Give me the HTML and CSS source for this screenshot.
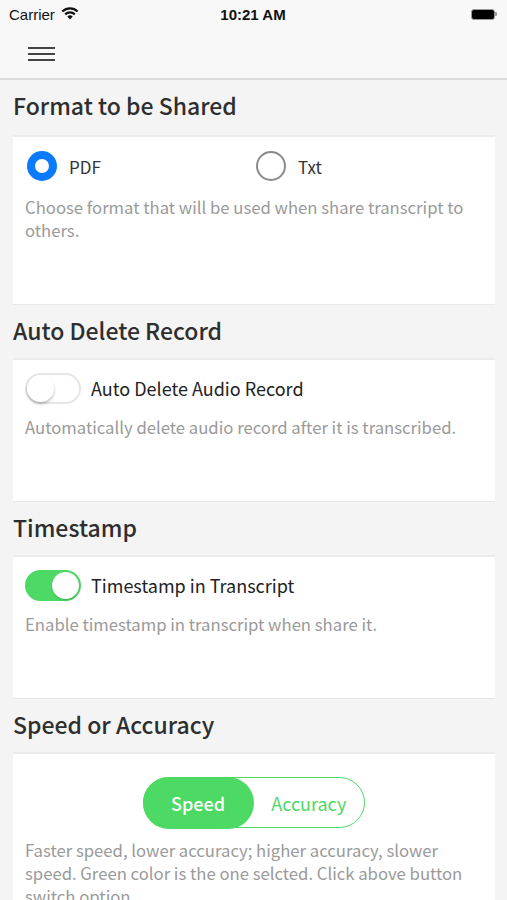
FILE: index.html
```html
<!DOCTYPE html>
<html lang="en">
<head>
  <meta charset="UTF-8" />
  <meta name="viewport" content="width=device-width, initial-scale=1.0"/>
  <title>Settings</title>
  <link rel="stylesheet" href="styles.css">
</head>
<body>

  <!-- status bar -->
  <div class="status-bar">
    <div class="carrier">
      Carrier
      <svg class="wifi" width="18" height="13" viewBox="0 0 18 13">
        <path d="M9 12.5 L6.3 9.6 A4 4 0 0 1 11.7 9.6 Z" fill="#111"/>
        <path d="M4.2 7.4 A6.8 6.8 0 0 1 13.8 7.4" stroke="#111" stroke-width="2.2" fill="none"/>
        <path d="M1.4 4.5 A10.8 10.8 0 0 1 16.6 4.5" stroke="#111" stroke-width="2.2" fill="none"/>
      </svg>
    </div>
    <div class="clock">10:21 AM</div>
    <div class="battery">
      <span class="battery-body"></span><span class="battery-nub"></span>
    </div>
  </div>

  <!-- nav bar -->
  <div class="nav-bar">
    <span class="hamburger"><i></i><i></i><i></i></span>
  </div>

  <section>
    <h2 class="first">Format to be Shared</h2>
    <div class="card">
      <div class="radio-row">
        <label class="radio checked"><span class="dot"></span>PDF</label>
        <label class="radio"><span class="dot"></span>Txt</label>
      </div>
      <p class="desc">Choose format that will be used when share transcript to others.</p>
    </div>
  </section>

  <section>
    <h2>Auto Delete Record</h2>
    <div class="card">
      <div class="switch-row">
        <span class="switch"><span class="knob"></span></span>
        <span class="switch-label">Auto Delete Audio Record</span>
      </div>
      <p class="desc">Automatically delete audio record after it is transcribed.</p>
    </div>
  </section>

  <section>
    <h2>Timestamp</h2>
    <div class="card">
      <div class="switch-row">
        <span class="switch on"><span class="knob"></span></span>
        <span class="switch-label">Timestamp in Transcript</span>
      </div>
      <p class="desc">Enable timestamp in transcript when share it.</p>
    </div>
  </section>

  <section>
    <h2>Speed or Accuracy</h2>
    <div class="card card-last">
      <div class="segment">
        <button class="seg-btn active">Speed</button>
        <button class="seg-btn">Accuracy</button>
      </div>
      <p class="desc">Faster speed, lower accuracy; higher accuracy, slower speed. Green color is the one selcted. Click above button switch option.</p>
    </div>
  </section>

</body>
</html>
```

FILE: styles.css
```css
body { margin: 0; background: #f4f4f4; font-family: "Noto Sans CJK KR", "Noto Sans", sans-serif; color: #333; }

.status-bar { height: 28px; background: #f8f8f8; display: flex; align-items: center; justify-content: space-between; padding: 0 10px 0 9px; font-family: "Liberation Sans", Arial, sans-serif; font-size: 15px; color: #111; }
.carrier { display: flex; align-items: center; gap: 6px; width: 120px; }
.wifi { margin-top: -2px; }
.clock { font-weight: bold; font-size: 15px; }
.battery { width: 120px; display: flex; justify-content: flex-end; align-items: center; }
.battery-body { width: 22px; height: 9px; background: #000; border: 1.5px solid #999; border-radius: 3px; }
.battery-nub { width: 2px; height: 4px; background: #999; border-radius: 0 1px 1px 0; }

.nav-bar { height: 50px; background: #f8f8f8; border-bottom: 2px solid #dcdcdc; display: flex; align-items: center; padding-left: 28px; }
.hamburger { display: flex; flex-direction: column; gap: 4px; margin-top: 1px; }
.hamburger i { display: block; width: 27px; height: 2px; background: #444; }

section { padding: 0 12px 0 13px; }
h2 { margin: 0; height: 53px; box-sizing: border-box; padding-top: 10px; font-size: 23px; line-height: 30px; font-weight: 500; color: #2e2e2e; }
h2.first { height: 55px; }

.card { background: #fff; border-top: 2px solid #ebebeb; border-bottom: 1px solid #e8e8e8; padding: 11px 12px 62px; }
.card-last { border-bottom: none; padding-top: 23px; }

.radio-row { display: flex; height: 36px; align-items: center; margin-bottom: 12px; }
.radio { display: flex; align-items: center; gap: 12px; font-size: 17px; color: #333; width: 231px; padding-left: 2px; }
.radio .dot { width: 26px; height: 26px; border-radius: 50%; border: 2px solid #8a8a8a; }
.radio.checked .dot { width: 14px; height: 14px; border: 8px solid #0a7aff; }

.switch-row { display: flex; align-items: center; gap: 10px; height: 34px; margin-bottom: 11px; }
.switch { width: 56px; height: 31px; box-sizing: border-box; border-radius: 16px; border: 2px solid #e6e6e6; background: #fff; position: relative; }
.switch .knob { position: absolute; top: 0; left: 0; width: 27px; height: 27px; border-radius: 50%; background: #fff; box-shadow: 0 2px 3px rgba(0,0,0,0.25); }
.switch.on { background: #4cd964; border-color: #4cd964; }
.switch.on .knob { left: auto; right: 0; box-shadow: 0 1px 2px rgba(0,0,0,0.2); }
.switch-label { font-size: 18px; color: #222; }

.desc { margin: 0; font-size: 16.7px; line-height: 23px; color: #9a9a9a; }

.segment { margin: 0 auto 11px; width: 222px; height: 51px; box-sizing: border-box; border: 1.5px solid #4cd964; border-radius: 26px; display: flex; align-items: stretch; }
.seg-btn { border: none; background: none; font-family: inherit; font-size: 18px; color: #4cd964; padding: 0; flex: 1; border-radius: 26px; margin: -1.5px 0; }
.seg-btn.active { background: #4cd964; color: #fff; font-weight: 500; flex: 0 0 111px; margin-left: -1.5px; }
```
